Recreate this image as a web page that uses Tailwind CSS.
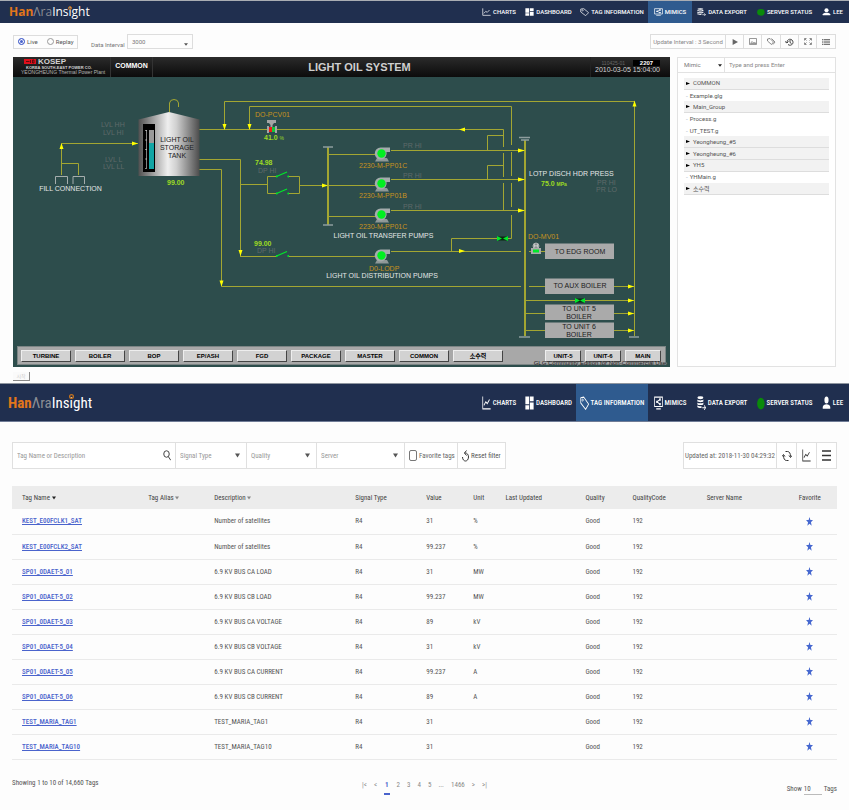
<!DOCTYPE html>
<html lang="en">
<head>
<meta charset="utf-8">
<meta name="viewport" content="width=device-width, initial-scale=1">
<title>HanAra Insight</title>
<script src="https://cdn.jsdelivr.net/npm/@tailwindcss/browser@4"></script>
</head>
<body class="bg-[#fdfdfd] font-['Roboto','Noto_Sans_CJK_KR',sans-serif] text-[6px] leading-[8px] text-[#555]">

<svg class="hidden" aria-hidden="true">
  <defs>
    <symbol id="i-charts" viewBox="0 0 24 24" preserveAspectRatio="none"><path d="M2 1v21h21M5 16l5-6 4 3 6-7" fill="none" stroke="currentColor" stroke-width="2"/></symbol>
    <symbol id="i-dashboard" viewBox="0 0 24 24" preserveAspectRatio="none"><path d="M1 1h10v13H1zM13 1h10v8H13zM1 16h10v7H1zM13 11h10v12H13z" fill="currentColor"/></symbol>
    <symbol id="i-tag" viewBox="0 0 24 24" preserveAspectRatio="none"><path d="M2 3l8-1 13 12-8 9L2 12z" fill="none" stroke="currentColor" stroke-width="2" stroke-linejoin="round"/><circle cx="7" cy="7" r="1.8" fill="none" stroke="currentColor" stroke-width="1.5"/></symbol>
    <symbol id="i-mimics" viewBox="0 0 24 24" preserveAspectRatio="none"><path d="M1.500 2h21v16h-21zM6 22h12M16 6l-8 4 8 4" fill="none" stroke="currentColor" stroke-width="2"/><path d="M14 4h4v4h-4zM6 8h4v4H6zM14 12h4v4h-4z" fill="currentColor"/></symbol>
    <symbol id="i-export" viewBox="0 0 24 24" preserveAspectRatio="none"><ellipse cx="9" cy="3" rx="8" ry="2.500" fill="currentColor"/><path d="M1 6c3 2 13 2 16 0v3c-3 2-13 2-16 0zM1 11c3 2 13 2 16 0v3c-3 2-13 2-16 0zM1 16c3 2 7 2 11 1.500v3c-4 .5-9 0-11-1.500z" fill="currentColor"/><path d="M14 20h8M19 16l4 4-4 4" fill="none" stroke="currentColor" stroke-width="1.800"/></symbol>
    <symbol id="i-status" viewBox="0 0 24 24" preserveAspectRatio="none"><ellipse cx="13" cy="13" rx="10" ry="10" fill="#0a8a0a"/></symbol>
    <symbol id="i-user" viewBox="0 0 24 24" preserveAspectRatio="none"><ellipse cx="12" cy="7" rx="5.500" ry="6" fill="currentColor"/><path d="M2 22v-3c0-3 5-5 10-5s10 2 10 5v3z" fill="currentColor"/></symbol>
    <symbol id="i-caret" viewBox="0 0 10 10" preserveAspectRatio="none"><path d="M0 1h10L5 9z" fill="currentColor"/></symbol>
    <symbol id="i-star" viewBox="0 0 24 24" preserveAspectRatio="none"><path d="M12 0l3 8h9l-7 6 2.500 9L12 18l-7.500 5L7 14 0 8h9z" fill="currentColor"/></symbol>
    <symbol id="pump" viewBox="0 0 20 16">
      <path d="M5 12h10l2 3.500H3z" fill="#8f9898"/>
      <path d="M9 1.500h9v4.500h-3.500a6 6 0 1 1-5.500-4.500z" fill="#a4acac"/>
      <circle cx="9.500" cy="7.500" r="4.200" fill="#00f020"/>
    </symbol>
    <symbol id="switch" viewBox="0 0 14 8">
      <path d="M1 6L11.500 1.500" stroke="#00e82a" stroke-width="1.200"/><circle cx="1.200" cy="6" r="1" fill="#00e82a"/><circle cx="12.800" cy="6" r="1" fill="#00e82a"/>
    </symbol>
  </defs>
</svg>

<section aria-label="Mimics">
  <header class="flex h-[23px] items-stretch border-t border-[#a9adb3] bg-[#202f4f] pl-[9px] text-white">
    <a href="#" class="flex items-center font-['Open_Sans',sans-serif] text-[12px] leading-[12px]"><span class="font-bold text-[#e2761b]">Han</span><span class="text-[#8a8d94]">Λra</span><span class="relative">Insight<svg class="absolute left-[16px] top-0 size-[4px]" viewBox="0 0 8 8"><circle cx="4" cy="4" r="3" fill="none" stroke="#c8741c" stroke-width="2"/></svg></span></a>
    <nav id="nav-top" class="ml-auto flex text-[6px] font-medium" aria-label="Main"></nav>
  </header>

  <div class="flex items-center pl-[13px] pr-[13px] pt-[11px]">
    <fieldset class="flex h-[14px] w-[65px] items-center gap-[9px] border border-[#ddd] pl-[4px]">
      <label class="flex items-center gap-[2px]"><input type="radio" name="mode" checked class="size-[7px] appearance-none rounded-full border border-[#4a63cc] bg-[#4a63cc] shadow-[inset_0_0_0_1px_white]">Live</label>
      <label class="flex items-center gap-[2px]"><input type="radio" name="mode" class="size-[7px] appearance-none rounded-full border border-[#999]">Replay</label>
    </fieldset>
    <label for="interval" class="ml-[13px] w-[36px] self-end whitespace-nowrap text-[#777]">Data Interval</label>
    <div class="relative h-[15px] w-[66px] border border-[#ddd]">
      <select id="interval" class="h-full w-full appearance-none pl-[4px] text-[6px] text-[#777]"><option>3000</option><option>5000</option></select>
      <svg class="pointer-events-none absolute bottom-[2px] right-[4px] h-[3px] w-[4px] text-[#555]"><use href="#i-caret"/></svg>
    </div>
    <div class="ml-auto flex h-[15px] items-stretch divide-x divide-[#ddd] border border-[#ddd]">
      <span class="flex w-[75px] items-center justify-center text-[#888]">Update Interval : 3 Second</span>
      <button aria-label="Play" class="flex w-[18px] items-center justify-center"><svg class="h-[6px] w-[6px]" viewBox="0 0 10 10"><path d="M1 0l9 5-9 5z" fill="#666"/></svg></button>
      <button aria-label="Image" class="flex w-[18px] items-center justify-center"><svg class="h-[7px] w-[8px]" viewBox="0 0 16 14" fill="none" stroke="#777" stroke-width="1.500"><path d="M1 1h14v12H1zM3 11l3-4 3 3 2-2 3 3z"/></svg></button>
      <button aria-label="Tags" class="flex w-[19px] items-center justify-center"><svg class="h-[7px] w-[9px]" viewBox="0 0 18 14" fill="none" stroke="#666" stroke-width="1.500"><path d="M1 2l5-1 7 7-4 5-8-7zM9 1l7 7-4 5"/></svg></button>
      <button aria-label="History" class="flex w-[18px] items-center justify-center"><svg class="h-[8px] w-[9px]" viewBox="0 0 18 16" fill="none" stroke="#444" stroke-width="2"><path d="M4 8a6 6 0 1 1 2 5M0 7l4 3 3-3M10 4v5l3 2"/></svg></button>
      <button aria-label="Full screen" class="flex w-[18px] items-center justify-center"><svg class="h-[7px] w-[8px]" viewBox="0 0 16 14" fill="none" stroke="#666" stroke-width="1.500"><path d="M1 5V1h4M11 1h4v4M15 9v4h-4M5 13H1V9M2 2l3 3M14 2l-3 3M14 12l-3-3M2 12l3-3"/></svg></button>
      <button aria-label="List" class="flex w-[18px] items-center justify-center"><svg class="h-[6px] w-[8px]" viewBox="0 0 16 12" stroke="#777" stroke-width="2"><path d="M0 1h3M4 1h12M0 4.300h3M4 4.300h12M0 7.600h3M4 7.600h12M0 11h3M4 11h12"/></svg></button>
    </div>
  </div>

  <div class="flex items-start gap-[7px] pl-[13px] pr-[13px] pt-[8px]">
    <main class="relative min-w-0 flex-1 bg-[#2d4d4c] pb-[2px] font-['Liberation_Sans','Noto_Sans_CJK_KR',sans-serif]">
      <div class="relative flex h-[20px] items-stretch bg-linear-to-b from-[#2b2b2b] to-[#0c0c0c] text-[#d4d4d4]">
        <div class="w-[97px] pl-[8px]">
          <div class="flex h-[9px] items-center gap-[2px] pl-[3px]"><svg class="h-[5px] w-[12px]" viewBox="0 0 24 10"><path d="M0 0h24v10H0z" fill="#e0101c"/><path d="M4 5h7M13 2v6M17 2h3v6h-3z" stroke="#3b0808" stroke-width="1.500" fill="none"/></svg><span class="text-[8px] font-bold leading-[8px]">KOSEP</span></div>
          <div class="whitespace-nowrap pl-[5px] text-[4px] font-bold leading-[4px]">KOREA SOUTH-EAST POWER CO.</div>
          <div class="whitespace-nowrap text-[5px] leading-[5px] text-[#b5b5b5]">YEONGHEUNG Thermal Power Plant</div>
        </div>
        <div class="flex w-[43px] items-center justify-center border-x border-[#333] pb-[2px] text-[7px] font-bold text-white">COMMON</div>
        <h1 class="absolute left-1/2 top-[4px] -translate-x-1/2 pl-[36px] text-[11px] font-bold leading-[12px] text-[#cfcfcf]">LIGHT OIL SYSTEM</h1>
        <div class="ml-auto flex w-[80px] flex-col items-end border-l border-[#222] pr-[10px] pt-[3px]">
          <div class="flex items-center gap-[8px]"><span class="text-[5px] leading-[6px] text-[#666]">110425-01</span><span class="w-[27px] bg-black text-center text-[6px] font-bold leading-[6px] text-white">2207</span></div>
          <time class="text-[7px] leading-[8px]">2010-03-05 15:04:00</time>
        </div>
      </div>

      <svg class="block w-full" viewBox="13 77 657 269" role="img" aria-label="Light oil system diagram" font-size="7">
        <defs><linearGradient id="steel"><stop offset="0" stop-color="#505050"/><stop offset=".48" stop-color="#eee"/><stop offset=".62" stop-color="#d0d0d0"/><stop offset="1" stop-color="#4c4c4c"/></linearGradient></defs>
        <g fill="none" stroke="#a3a632" stroke-width="1">
          <path d="M61.500 175V143.500H138M61.500 163.500H78.500V175"/>
          <path d="M169.500 112V103Q170 99.500 174 99.500Q178 99.500 178.500 103V107"/>
          <path d="M199 129.500H503.500M199 159.500H240.500V256M199 169.500H221.500V286.500H521M529 286.500H546"/>
          <path d="M224.500 130V101.500H634.500V336M249.500 130V106.500H511.500V145M511.500 152V176M511.500 183V207M511.500 215V238.500H451.500V251"/>
          <path d="M503.500 129.500V147M503.500 153V177M503.500 183V211M503.500 135.500H487.500V150M503.500 165.500H487.500V179"/>
          <path d="M240 184.500H267.500M277 176.500H267.500V193.500H277M289 176.500H299.500V193.500H289M299.500 185.500H376M328 154.500H376M328 216.500H376"/>
          <path d="M391 150.500H525M391 179.500H525M391 210.500H525M240 256.500H277M289 256.500H376M391 251.500H521M529 251.500H546"/>
          <path d="M614 286.500H634M525 300.500H634M525 313.500H634M525 330.500H634"/>
          <path d="M328 147V225M525 140V336" stroke-width="2"/>
        </g>
        <g stroke="#8d9d9d" stroke-width="1.500"><path d="M323 147H333M323 225H333M519 137.500H530M521 140H529M519 337H530M629 337H639"/></g>
        <path d="M55.500 184V176.500H67.500V184M73 184V176.500H84.500V184" fill="none" stroke="#a5adad"/>
        <path fill="#ff0" d="M61.500 143l-2 6h4zM138 143.500l-6-2v4zM224.500 130l-2-6h4zM249.500 130l-2-6h4zM634.500 100.500l-2 6h4zM459 129.500l6-2v4zM328 185.500l-6-2v4zM240.500 256l-2-6h4zM221.500 286.500l-2-6h4zM525 150.500l-7-2v4zM525 179.500l-7-2v4zM525 210.500l-7-2v4zM465 251l-6-2v4zM634 286.500l-6-2v4zM634 300.500l-6-2v4zM634 313.500l-6-2v4zM634 330.500l-6-2v4z"/>
        <g><path d="M497 238.500h11M575 300.500h10" stroke="#0a2a10" stroke-width="4"/><path d="M497 236l5 2.500-5 2.500zM508 236l-5 2.500 5 2.500zM575 298l5 2.500-5 2.500zM585 298l-5 2.500 5 2.500z" fill="#00e82a"/></g>
        <path d="M138.500 119.500L169 112l30.500 7.500V176h-61z" fill="url(#steel)"/>
        <path d="M143 124h12v48h-12z"/><path d="M149 130h5v13h-5z" fill="#999"/><path d="M149 143h5v26h-5z" fill="#12a5a5"/>
        <path d="M146.500 130v38M145 130.500h2M145 140h2M145 149.500h2M145 159h2M145 168.500h2" stroke="#ddd" stroke-width=".6"/>
        <use href="#pump" x="372" y="146" width="20" height="16"/><use href="#pump" x="372" y="176" width="20" height="16"/><use href="#pump" x="372" y="207" width="20" height="16"/><use href="#pump" x="372" y="248" width="20" height="16"/>
        <use href="#switch" x="275.500" y="170.500" width="14" height="8"/><use href="#switch" x="275.500" y="187.500" width="14" height="8"/><use href="#switch" x="275.500" y="250" width="14" height="8"/>
        <path d="M267 120h9v3h-2l-1.500 2v3h-2v-3l-1.500-2h-2zM267 126h2v7h-2zM275 126h2v7h-2z" fill="#a5a5a5"/><path d="M269 127h3v5h-3z" fill="#f01818"/><path d="M272 127h3v5h-3z" fill="#10c838"/>
        <circle cx="536" cy="246" r="3" fill="#889090" stroke="#ccc" stroke-width=".7"/><path d="M534.500 247.500v-3l1.500 2 1.500-2v3M536 249v2" stroke="#e8e8e8" stroke-width=".6" fill="none"/><path d="M531 248h2v6h-2zM539 248h2v6h-2zM533 248h6v6h-6z" fill="#aaa"/><path d="M533 249.500h6v3h-6z" fill="#00e82a"/>
        <g fill="#aaa"><path d="M545 243.500h69v15.500h-69zM545 278.500h69v15.500h-69zM545 304.500h69v15.500h-69zM545 322.500h69v15.500h-69z"/></g>
        <g fill="#1c1c1c" text-anchor="middle">
          <text x="177" y="142">LIGHT OIL</text><text x="177" y="150">STORAGE</text><text x="177" y="158">TANK</text>
          <text x="580" y="254">TO EDG ROOM</text><text x="580" y="288">TO AUX BOILER</text><text x="579" y="311">TO UNIT 5</text><text x="579" y="319">BOILER</text><text x="579" y="329">TO UNIT 6</text><text x="579" y="337">BOILER</text>
        </g>
        <g fill="#e2e6e6"><text x="70.500" y="191" text-anchor="middle">FILL CONNECTION</text><text x="383.500" y="238" text-anchor="middle">LIGHT OIL TRANSFER PUMPS</text><text x="382" y="278" text-anchor="middle">LIGHT OIL DISTRIBUTION PUMPS</text><text x="529" y="176">LOTP DISCH HDR PRESS</text></g>
        <g fill="#5f6a6a"><text x="101" y="127">LVL HH</text><text x="103" y="135">LVL HI</text><text x="105" y="162">LVL L</text><text x="103" y="169">LVL LL</text><text x="258" y="173">DP HI</text><text x="257" y="253">DP HI</text><text x="403" y="148">PR HI</text><text x="403" y="178">PR HI</text><text x="403" y="209">PR HI</text><text x="597" y="185">PR HI</text><text x="596" y="192">PR LO</text></g>
        <g fill="#c8921e"><text x="255" y="117">DO-PCV01</text><text x="359" y="168">2230-M-PP01C</text><text x="359" y="198">2230-M-PP01B</text><text x="359" y="229">2230-M-PP01C</text><text x="369" y="271">D0-LODP</text><text x="528" y="239">DO-MV01</text></g>
        <g fill="#9edb24" font-weight="bold"><text x="167" y="185">99.00</text><text x="264" y="140">41.0 <tspan font-size="5" font-weight="normal">%</tspan></text><text x="255" y="165">74.98</text><text x="254" y="246">99.00</text><text x="541" y="186">75.0 <tspan font-size="5">MPa</tspan></text></g>
      </svg>

      <div id="units" class="mx-[4px] flex h-[19px] items-center gap-[4px] border border-[#7c8585] bg-[#a8a8a8] pl-[3px] pr-[4px]"></div>
      <div class="absolute bottom-0 right-[4px] whitespace-nowrap text-[6px] leading-[7px] text-[#222] [text-shadow:1px_0_0_#999]">GLG Community Edition for Non-Commercial Use</div>
    </main>

    <aside class="w-[159px] self-stretch border border-[#e2e2e2] bg-white">
      <div class="flex h-[15px] border-b border-[#e2e2e2]">
        <div class="relative w-[47px] border-r border-[#e2e2e2]">
          <select aria-label="Search type" class="h-full w-full appearance-none pl-[6px] text-[6px] text-[#777]"><option>Mimic</option><option>Tag</option></select>
          <svg class="pointer-events-none absolute right-[2px] top-[6px] h-[3px] w-[4px] text-[#222]"><use href="#i-caret"/></svg>
        </div>
        <input aria-label="Search" placeholder="Type and press Enter" class="min-w-0 flex-1 pl-[4px] text-[6px] placeholder:text-[#888]">
      </div>
      <ul id="tree" class="mx-[6px] mt-[5px] grid h-[117px] grid-rows-10"></ul>
    </aside>
  </div>
</section>

<div class="pl-[13px] pt-[5px]"><button class="block h-[9px] w-[17px] border-b border-r border-[#888] bg-[#fafafa] text-center text-[5px] leading-[6px] text-[#ccc]">시작</button></div>

<section aria-label="Tag information" class="mt-[2px] font-['Roboto_Condensed','Roboto',sans-serif] text-[7px] leading-[10px]">
  <header class="flex h-[39px] items-stretch border-b border-t border-b-[#6f7c96] border-t-[#8e959f] bg-[#202f4f] pl-[8px] text-white">
    <a href="#" class="flex items-center text-[15px] leading-[18px]"><span class="font-bold text-[#e2761b]">Han</span><span class="text-[#8a8d94]">Λra</span><span class="relative">Insight<svg class="absolute left-[17px] top-0 size-[5px]" viewBox="0 0 8 8"><circle cx="4" cy="4" r="3" fill="none" stroke="#c8741c" stroke-width="2"/></svg></span></a>
    <nav id="nav-bottom" class="ml-auto flex text-[7px] font-medium" aria-label="Main"></nav>
  </header>

  <form class="flex items-center justify-between px-[12px] pt-[20px]">
    <div class="flex h-[27px] items-stretch divide-x divide-[#e0e0e0] border border-[#e0e0e0] bg-white text-[#999]">
      <div class="relative w-[163px]">
        <input aria-label="Tag Name or Description" placeholder="Tag Name or Description" class="h-full w-full pl-[4px] text-[7px] placeholder:text-[#999]">
        <svg class="absolute right-[4px] top-[7px] h-[11px] w-[8px]" viewBox="0 0 16 22" fill="none" stroke="#444" stroke-width="2"><ellipse cx="7" cy="8" rx="5.500" ry="6.500"/><path d="M10.500 13l5 7.500"/></svg>
      </div>
      <div class="relative w-[71px]"><select aria-label="Signal Type" class="h-full w-full appearance-none pl-[4px] text-[7px]"><option>Signal Type</option></select><svg class="pointer-events-none absolute right-[6px] top-[10px] h-[5px] w-[5px] text-[#555]"><use href="#i-caret"/></svg></div>
      <div class="relative w-[70px]"><select aria-label="Quality" class="h-full w-full appearance-none pl-[4px] text-[7px]"><option>Quality</option></select><svg class="pointer-events-none absolute right-[6px] top-[10px] h-[5px] w-[5px] text-[#555]"><use href="#i-caret"/></svg></div>
      <div class="relative w-[88px]"><select aria-label="Server" class="h-full w-full appearance-none pl-[4px] text-[7px]"><option>Server</option></select><svg class="pointer-events-none absolute right-[6px] top-[10px] h-[5px] w-[5px] text-[#555]"><use href="#i-caret"/></svg></div>
      <label class="flex w-[53px] items-center gap-[2px] whitespace-nowrap pl-[4px] text-[#666]"><input type="checkbox" class="h-[11px] w-[8px] shrink-0 appearance-none rounded-[2px] border border-[#777]">Favorite tags</label>
      <button type="reset" class="flex w-[47px] items-center gap-[2px] whitespace-nowrap pl-[4px] text-[#555]"><svg class="h-[12px] w-[7px] shrink-0" viewBox="0 0 14 24" preserveAspectRatio="none" fill="none" stroke="#333" stroke-width="2"><path d="M5 6h2c3 0 6 3 6 8s-3 8-6 8-6-3-6-8M9 1L5 6l4 5"/></svg>Reset filter</button>
    </div>
    <div class="flex h-[27px] items-stretch divide-x divide-[#e0e0e0] border border-[#e0e0e0] bg-white text-[#333]">
      <span class="flex w-[93px] items-center justify-center whitespace-nowrap text-[#666]">Updated at: 2018-11-30 04:29:32</span>
      <button type="button" aria-label="Refresh" class="flex w-[20px] items-center justify-center"><svg class="h-[12px] w-[10px]" viewBox="0 0 20 24" preserveAspectRatio="none" fill="none" stroke="currentColor" stroke-width="2"><path d="M7 3h4c4 0 6 4 6 10M13 21H9c-4 0-6-4-6-10M14 11l3 4 3-4M0 13l3-4 3 4"/></svg></button>
      <button type="button" aria-label="Chart" class="flex w-[20px] items-center justify-center"><svg class="h-[13px] w-[9px]"><use href="#i-charts"/></svg></button>
      <button type="button" aria-label="Menu" class="flex w-[19px] items-center justify-center"><svg class="h-[11px] w-[9px]" viewBox="0 0 9 11"><path d="M0 1h9M0 5.500h9M0 10h9" stroke="currentColor" stroke-width="1.500"/></svg></button>
    </div>
  </form>

  <div class="px-[12px] pt-[17px]">
    <table class="w-full table-fixed border-collapse text-left">
      <colgroup><col class="w-[15.3%]"><col class="w-[8%]"><col class="w-[17.1%]"><col class="w-[8.6%]"><col class="w-[5.7%]"><col class="w-[3.9%]"><col class="w-[9.7%]"><col class="w-[5.7%]"><col class="w-[9%]"><col class="w-[10.4%]"><col class="w-[6.6%]"></colgroup>
      <thead class="bg-[#ececec] text-[#444]"><tr id="head" class="h-[23px]"></tr></thead>
      <tbody id="rows"></tbody>
    </table>
  </div>

  <footer class="grid grid-cols-3 px-[12px] pt-[18px]">
    <p>Showing 1 to 10 of 14,660 Tags</p>
    <nav aria-label="Pages" class="flex justify-center gap-[7px] pt-[2px] text-[#888]">
      <a href="#">|&lt;</a><a href="#">&lt;</a><a href="#" aria-current="page" class="border-b-2 border-[#4a63cc] px-[1px] font-bold text-[#4a63cc]">1</a><a href="#">2</a><a href="#">3</a><a href="#">4</a><a href="#">5</a><span>...</span><a href="#">1466</a><a href="#">&gt;</a><a href="#">&gt;|</a>
    </nav>
    <label class="flex items-baseline justify-end gap-[2px] pt-[6px]">Show <input value="10" class="w-[18px] border-b border-[#bbb] text-[7px] leading-[10px]"> Tags</label>
  </footer>
</section>

<script>
  const items = [
    ['CHARTS', 'i-charts', 'w-[44px]'], ['DASHBOARD', 'i-dashboard', 'w-[55px]'],
    ['TAG INFORMATION', 'i-tag', 'w-[72px]'], ['MIMICS', 'i-mimics', 'w-[44px]'],
    ['DATA EXPORT', 'i-export', 'w-[60px]'], ['SERVER STATUS', 'i-status', 'w-[64px]'], ['LEE', 'i-user', 'w-[33px]']
  ];
  const nav = (id, active, icon) => document.getElementById(id).innerHTML = items.map(([t, i, w]) =>
    `<a href="#" class="flex items-center justify-center gap-[2px] whitespace-nowrap ${w} ${t === active ? 'bg-[#2f5b8f]' : ''}"><svg class="shrink-0 ${icon}"><use href="#${i}"/></svg>${t}</a>`).join('');
  nav('nav-top', 'MIMICS', 'h-[8px] w-[9px]');
  nav('nav-bottom', 'TAG INFORMATION', 'h-[14px] w-[9px]');

  const unit = (t, c) => `<button class="h-[12px] ${c} border border-b-[#444] border-l-[#eee] border-r-[#444] border-t-[#eee] bg-[#d2d2d2] text-[6px] font-bold leading-[8px] text-black">${t}</button>`;
  document.getElementById('units').innerHTML =
    ['TURBINE', 'BOILER', 'BOP', 'EP/ASH', 'FGD', 'PACKAGE', 'MASTER', 'COMMON', '소수력'].map(t => unit(t, 'w-[50px]')).join('') +
    '<span class="flex-1"></span>' + ['UNIT-5', 'UNIT-6', 'MAIN'].map(t => unit(t, 'w-[36px]')).join('');

  document.getElementById('tree').innerHTML =
    ['+COMMON', 'Example.glg', '+Main_Group', 'Process.g', 'UT_TEST.g', '+Yeongheung_#5', '+Yeongheung_#6', '+YH5', 'YHMain.g', '+소수력'].map(t =>
      t[0] === '+'
        ? `<li class="flex items-center gap-[3px] border-b border-[#ddd] bg-[#f2f2f2] pl-[2px]"><svg class="h-[3px] w-[4px]" viewBox="0 0 8 6"><path d="M0 0l8 3-8 3z"/></svg>${t.slice(1)}</li>`
        : `<li class="flex items-center gap-[2px] pl-[2px]"><span class="text-[#9ab]">-</span>${t}</li>`).join('');

  const caret = c => ` <svg class="inline h-[4px] w-[4px] ${c}"><use href="#i-caret"/></svg>`;
  document.getElementById('head').innerHTML =
    ['Tag Name', 'Tag Alias', 'Description', 'Signal Type', 'Value', 'Unit', 'Last Updated', 'Quality', 'QualityCode', 'Server Name', 'Favorite'].map((t, i) =>
      `<th class="whitespace-nowrap font-normal ${i === 10 ? 'text-center' : 'pl-[10px]'}">${t}${i === 0 ? caret('text-[#222]') : i < 3 ? caret('text-[#888]') : ''}</th>`).join('');
  const data = [
    ['KEST_E00FCLK1_SAT', 'Number of satellites', '31', '%'], ['KEST_E00FCLK2_SAT', 'Number of satellites', '99.237', '%'],
    ['SP01_0DAET-5_01', '6.9 KV BUS CA LOAD', '31', 'MW'], ['SP01_0DAET-5_02', '6.9 KV BUS CB LOAD', '99.237', 'MW'],
    ['SP01_0DAET-5_03', '6.9 KV BUS CA VOLTAGE', '89', 'kV'], ['SP01_0DAET-5_04', '6.9 KV BUS CB VOLTAGE', '31', 'kV'],
    ['SP01_0DAET-5_05', '6.9 KV BUS CA CURRENT', '99.237', 'A'], ['SP01_0DAET-5_06', '6.9 KV BUS CB CURRENT', '89', 'A'],
    ['TEST_MARIA_TAG1', 'TEST_MARIA_TAG1', '31', ''], ['TEST_MARIA_TAG10', 'TEST_MARIA_TAG10', '31', '']
  ];
  document.getElementById('rows').innerHTML = data.map(([n, d, v, u]) =>
    `<tr class="h-[25px] border-b border-[#eaeaea]">` +
    [`<a href="#" class="font-medium text-[#4a63cc] underline">${n}</a>`, '', d, 'R4', v, u, '', 'Good', '192', ''].map(c => `<td class="whitespace-nowrap pl-[10px]">${c}</td>`).join('') +
    `<td class="text-center"><button aria-label="Favorite" class="align-middle"><svg class="h-[9px] w-[7px] text-[#4668d0]"><use href="#i-star"/></svg></button></td></tr>`).join('');
</script>
</body>
</html>
